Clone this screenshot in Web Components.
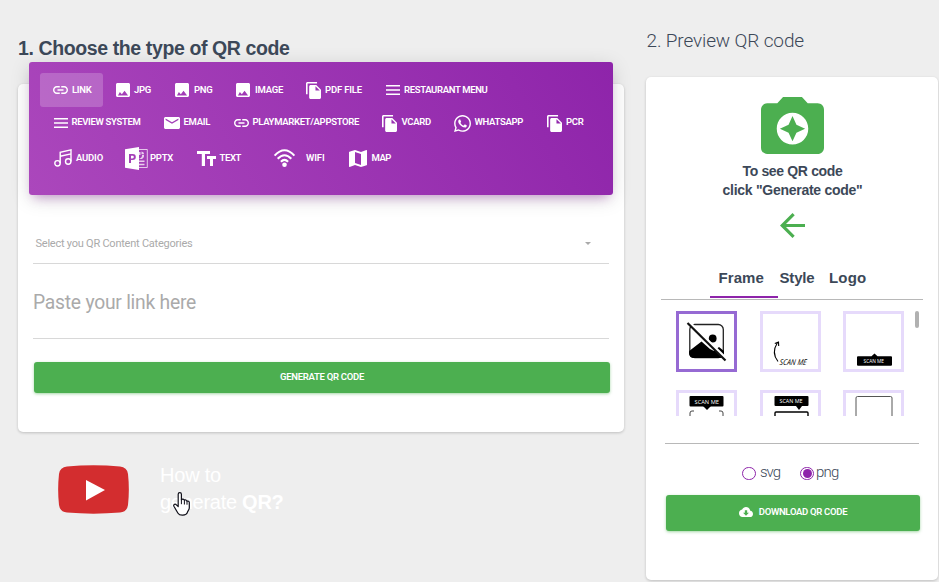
<!DOCTYPE html>
<html lang="en"><head><meta charset="utf-8"><title>QR code generator</title>
<style>
html,body{margin:0;height:582px;overflow:hidden;background:#eee}
body{font-family:Roboto,"Liberation Sans",sans-serif;color:#3c4858}
</style></head><body><qr-app></qr-app>
<script>
const ICONS={
link:['2 7 20 10','<path d="M3.9 12c0-1.71 1.39-3.1 3.1-3.1h4V7H7c-2.76 0-5 2.24-5 5s2.24 5 5 5h4v-1.9H7c-1.71 0-3.1-1.39-3.1-3.1zM8 13h8v-2H8v2zm9-6h-4v1.9h4c1.71 0 3.1 1.39 3.1 3.1s-1.39 3.1-3.1 3.1h-4V17h4c2.76 0 5-2.24 5-5s-2.24-5-5-5z"/>'],
image:['3 3 18 18','<path d="M21 19V5c0-1.1-.9-2-2-2H5c-1.1 0-2 .9-2 2v14c0 1.1.9 2 2 2h14c1.1 0 2-.9 2-2zM8 14.500l2.500 3.010L14 13l4.500 6h-13l2.500-4.500z"/>'],
copy:['2 1 19 22','<path d="M16 1H4c-1.100 0-2 .9-2 2v14h2V3h12V1zm-1 4l6 6v10c0 1.100-.9 2-2 2H7.990C6.890 23 6 22.100 6 21l.010-14c0-1.100.890-2 1.990-2h7zm-1 7h5.500L14 6.500V12z"/>'],
menu:['0 0 14 10','<path d="M0 0h14v1.500H0zM0 4.200h14v1.500H0zM0 8.400h14v1.500H0z"/>'],
mail:['2 4 20 16','<path d="M20 4H4c-1.100 0-1.990.9-1.990 2L2 18c0 1.100.9 2 2 2h16c1.100 0 2-.9 2-2V6c0-1.100-.9-2-2-2zm0 4l-8 5-8-5V6l8 5 8-5v2z"/>'],
whatsapp:['2 2 20 20','<path d="M12.04 2C6.58 2 2.13 6.45 2.13 11.91C2.13 13.66 2.59 15.36 3.45 16.86L2.05 22L7.3 20.62C8.75 21.41 10.38 21.83 12.04 21.83C17.5 21.83 21.95 17.38 21.95 11.92C21.95 9.27 20.92 6.78 19.05 4.91C17.18 3.03 14.69 2 12.04 2M12.05 3.67C14.25 3.67 16.31 4.53 17.87 6.09C19.42 7.65 20.28 9.72 20.28 11.92C20.28 16.46 16.58 20.15 12.04 20.15C10.56 20.15 9.11 19.76 7.85 19L7.55 18.83L4.43 19.65L5.26 16.61L5.06 16.29C4.24 15 3.8 13.47 3.8 11.91C3.81 7.37 7.5 3.67 12.05 3.67M8.53 7.33C8.37 7.33 8.1 7.39 7.87 7.64C7.65 7.89 7 8.5 7 9.71C7 10.93 7.89 12.1 8 12.27C8.14 12.44 9.76 14.94 12.25 16C12.84 16.27 13.3 16.42 13.66 16.53C14.25 16.72 14.79 16.69 15.22 16.63C15.7 16.56 16.68 16.03 16.89 15.45C17.1 14.87 17.1 14.38 17.04 14.27C16.97 14.17 16.81 14.11 16.56 14C16.31 13.86 15.09 13.26 14.87 13.18C14.64 13.1 14.5 13.06 14.31 13.3C14.15 13.55 13.67 14.11 13.53 14.27C13.38 14.44 13.24 14.46 13 14.34C12.74 14.21 11.94 13.95 11 13.11C10.26 12.45 9.77 11.64 9.62 11.39C9.5 11.15 9.61 11 9.73 10.89C9.84 10.78 10 10.6 10.1 10.45C10.23 10.31 10.27 10.2 10.35 10.04C10.43 9.87 10.39 9.73 10.33 9.61C10.27 9.5 9.77 8.26 9.56 7.77C9.36 7.29 9.16 7.35 9 7.34C8.86 7.34 8.7 7.33 8.53 7.33Z"/>'],
audio:['0 0 18 18','<g fill="none" stroke="currentColor" stroke-width="1.400"><circle cx="3.500" cy="14.300" r="2.700"/><circle cx="14.200" cy="12.500" r="2.700"/><path d="M6.200 14.300V3.300L17 .9v11.600M6.200 7.300L17 4.900"/></g>'],
pptx:['0 0 23 23','<path fill-rule="evenodd" d="M0 2.200L14 0v23L0 20.700zM4 7v9h2v-3h1.500c2.500 0 3.300-1.300 3.300-3S10 7 7.800 7zm2 1.700h1.300c1 0 1.500.4 1.500 1.300s-.5 1.400-1.500 1.400H6z"/><path fill="none" stroke="currentColor" stroke-width="1" opacity=".7" d="M14 2.500h8.300v18H14"/><path opacity=".75" d="M14 13.500h5.500V15H14zM14 16.800h5.500v1.400H14zM14 5v3h3a3 3 0 0 1-3 3.500 3.300 3.300 0 0 0 5-3.500h-3.500V5z"/><path opacity=".75" d="M16.500 4.500a3 3 0 0 1 2.700 2.700h-2.700z"/>'],
text:['0 0 19 15','<path d="M0 0h13v3H8v12H4.800V3H0zM10 5h9v3h-3v7h-3V8h-3z"/>'],
wifi:['0 0 21 18','<g fill="none" stroke="currentColor" stroke-width="2.100"><path d="M.6 6.600Q10.500-4 20.400 6.600M3.700 9.800q6.800-7 13.600 0M6.900 12.700q3.600-3.700 7.200 0"/></g><circle cx="10.500" cy="15.700" r="2.300"/>'],
map:['3 3 18 18','<path d="M20.500 3l-.160.030L15 5.100 9 3 3.360 4.900c-.210.070-.360.250-.360.480V20.500c0 .280.220.500.500.500l.160-.030L9 18.900l6 2.100 5.640-1.900c.210-.070.360-.250.360-.480V3.500c0-.280-.220-.500-.500-.500zM15 19l-6-2.110V5l6 2.110V19z"/>'],
camera:['2 3 20 18','<path d="M9 3L7.170 5H4c-1.100 0-2 .9-2 2v12c0 1.100.9 2 2 2h16c1.100 0 2-.9 2-2V7c0-1.100-.9-2-2-2h-3.170L15 3H9zm3 15c-2.760 0-5-2.240-5-5s2.240-5 5-5 5 2.240 5 5-2.240 5-5 5zm0-1l1.250-2.750L16 13l-2.750-1.250L12 9l-1.250 2.750L8 13l2.750 1.250z"/>'],
back:['4 4 16 16','<path d="M20 11H7.830l5.590-5.590L12 4l-8 8 8 8 1.410-1.410L7.830 13H20v-2z"/>'],
cloud:['0 4 24 16','<path d="M19.350 10.040C18.670 6.590 15.640 4 12 4 9.110 4 6.600 5.640 5.350 8.040 2.340 8.360 0 10.910 0 14c0 3.310 2.690 6 6 6h13c2.760 0 5-2.240 5-5 0-2.640-2.050-4.780-4.650-4.960zM17 13l-5 5-5-5h3V9h4v4h3z"/>'],
youtube:['0 0 71 49','<path fill="#d32d2f" d="M9 1.500Q35.500-.8 62 1.500 69 2 70 9q1.700 15.500 0 31-1 7-8 7.500-26.500 2.300-53 0Q2 47 1 40-.7 24.500 1 9 2 2 9 1.500z"/><path fill="#fff" d="M28 15l19 10-19 10.500z"/>'],
caret:['0 0 6 3','<path d="M0 0h6L3 3z"/>'],
hand:['0 0 17 24','<path fill="#fff" stroke="#10101a" stroke-width="1.200" stroke-linejoin="round" d="M5.200 14.500V2.300C5.200.1 8.400.1 8.400 2.300v5.500c.7-1 2.700-.8 3 .6.800-.8 2.400-.5 2.600.9.900-.6 2.300-.1 2.300 1.300v5.500c0 1.600-1.700 3-2 4.500-1 3.200-7.800 3.200-9.300.6L.9 14.300c-.8-1.600 1-2.800 2.200-1.700z"/><path stroke="#10101a" fill="none" d="M8.400 7.500v4.700M11.400 8.500v4M14 9.500v3.200"/>']
};
const define=(name,html,setup)=>{
  const t=document.createElement('template');t.innerHTML=html;
  customElements.define(name,class extends HTMLElement{
    connectedCallback(){
      if(this.shadowRoot)return;
      this.attachShadow({mode:'open'}).append(t.content.cloneNode(true));
      if(setup)setup(this,this.shadowRoot);
    }
  });
};
/* icon: name, w, h */
define('qr-icon','<style>:host{display:block;flex:none}svg{display:block;fill:currentColor;overflow:visible}</style>',(el,r)=>{
  const [vb,body]=ICONS[el.getAttribute('name')];
  r.innerHTML+=`<svg width="${el.getAttribute('w')}" height="${el.getAttribute('h')}" viewBox="${vb}" preserveAspectRatio="none">${body}</svg>`;
});
/* single line of text whose tracking is set so that it spans w pixels */
define('fit-text','<style>:host{display:block;white-space:nowrap;flex:none}</style><span><slot></slot></span>',(el,r)=>{
  const s=r.querySelector('span'),w=+el.getAttribute('w'),n=el.textContent.length;
  s.style.letterSpacing=(w-s.getBoundingClientRect().width)/n+'px';
});
/* one entry of the type menu: left offset comes from the track widths of its row */
define('qr-type',`<style>:host{display:flex;align-items:center;height:34px;box-sizing:border-box;padding-left:13px;border-radius:3px;font-size:9.5px;font-weight:600;color:#fff}
:host([active]){background:rgba(255,255,255,.2)}</style><slot></slot>`);
define('qr-types',`<style>:host{display:block;height:133px;margin:-22px 11px 0;border-radius:3px;box-sizing:border-box;padding:11px 11px 0;background:linear-gradient(60deg,#ab47bc,#8e24aa);box-shadow:0 4px 20px 0 rgba(0,0,0,.14),0 7px 10px -5px rgba(156,39,176,.4)}
.row{display:grid;height:34px;justify-content:start}
.a{grid-template-columns:63px 59px 61px 70px 80px 120px}
.b{grid-template-columns:110px 70px 148px 72px 93px 60px;margin-top:-2px}
.c{grid-template-columns:71px 72px 77px 75px 70px;margin-top:2px}
fit-text{margin-left:var(--g,4px);margin-top:-1px}
</style><div class="row a"></div><div class="row b"></div><div class="row c"></div>`,(el,r)=>{
  const rows={a:[['link',15,8,4,'LINK',19.500],['image',14,14,4,'JPG',17],['image',14,14,5,'PNG',18.500],['image',14,14,5,'IMAGE',28],['copy',15,17,4,'PDF FILE',37],['menu',14,10,4,'RESTAURANT MENU',83.500]],
  b:[['menu',14,10,3.500,'REVIEW SYSTEM',69],['mail',16,12,3.500,'EMAIL',26.500],['link',15,8,3.500,'PLAYMARKET/APPSTORE',106.500],['copy',15,17,4.500,'VCARD',29.500],['whatsapp',17,17,3.500,'WHATSAPP',48.500],['copy',15,17,4,'PCR',17.500]],
  c:[['audio',18,18,4,'AUDIO',27],['pptx',23,23,2,'PPTX',23],['text',19,15,3.500,'TEXT',21.500],['wifi',21,18,11,'WIFI',18.500],['map',18,17,4.500,'MAP',19.500]]};
  /* the lower rows start one pixel further in than the highlighted entry */
  const shift={a:0,b:1,c:1};
  for(const k in rows){
    const row=r.querySelector('.'+k);row.style.marginLeft=shift[k]+'px';
    row.innerHTML=rows[k].map(([i,w,h,g,t,tw],n)=>`<qr-type ${k=='a'&&!n?'active':''}><qr-icon name="${i}" w="${w}" h="${h}" style="margin-top:${k=='b'?2:0}px"></qr-icon><fit-text w="${tw}" style="--g:${g}px">${t}</fit-text></qr-type>`).join('');
  }
});
define('qr-card','<style>:host{display:block;box-sizing:border-box;background:#fff;border-radius:5px;box-shadow:0 1px 3px rgba(0,0,0,.2)}</style><slot></slot>');
define('qr-field',`<style>:host{display:flex;align-items:center;justify-content:space-between;box-sizing:border-box;border-bottom:1px solid #d8d8d8;color:#aaa;font-size:11px}</style><slot></slot>`);
define('qr-button',`<style>:host{display:flex;align-items:center;justify-content:center;box-sizing:border-box;background:#4caf50;color:#fff;border-radius:3px;font-size:9.5px;font-weight:600;box-shadow:0 1px 3px rgba(76,175,80,.5)}</style><slot></slot>`);
define('qr-radio',`<style>:host{display:flex;align-items:center}i{display:flex;box-sizing:border-box;width:14px;height:13px;border:1px solid #8e24aa;border-radius:7px;margin-right:var(--g,4px);margin-top:2px;padding:1px}
:host([checked]) i::before{content:"";flex:1;border-radius:50%;background:#8e24aa;margin:0 .5px}</style><i></i><slot></slot>`);
const scan=(x,y,w,fs=6)=>`<text x="${x}" y="${y}" font-family="Open Sans,sans-serif" font-size="${fs}" fill="#fff" textLength="${w}" lengthAdjust="spacingAndGlyphs">SCAN ME</text>`;
const FRAMES=[
`<rect x="10.800" y="10.500" width="33.500" height="33" rx="5" fill="#fff" stroke="#222" stroke-width="1.300"/><path d="M10.200 37L22.500 27.500l8.500 7.500 4 2 5-4 5 4V39.500q0 4.500-5 4.500h-25q-5 0-5-5z"/><circle cx="33.700" cy="24.500" r="3.900"/><path d="M10 8.500L46 44" stroke="#fff" stroke-width="3.500"/><path d="M8.500 9L46.500 46.500" stroke="#111" stroke-width="2.200"/>`,
`<path d="M15 47.500Q8 39 14.500 28.500M11.800 29.500l3.700-1.500.2 4" fill="none" stroke="#000" stroke-width="1.100"/><text x="16.500" y="50.800" transform="skewX(-8) translate(7 0)" font-family="Open Sans,sans-serif" font-style="italic" font-size="8" textLength="27" lengthAdjust="spacingAndGlyphs">SCAN ME</text>`,
`<path d="M11 42.300h14.500l3-2.800 3 2.800H45q1 0 1 1v7.500q0 1-1 1H12q-1 0-1-1v-7.500q0-1 1-1z"/>${scan(17.500,49,20.500,5)}`,
`<rect x="10.500" y="3" width="34" height="10.500" rx="1"/><path d="M24 13h8l-4 4z"/>${scan(15.500,10.500,24.500)}<path d="M11 30v-10q0-2 2-2h2M40 18h2q2 0 2 2v10" fill="none" stroke="#444"/>`,
`<rect x="11.500" y="3" width="34" height="10" rx="1"/><path d="M33 13h6l-3 4z"/>${scan(16.500,10,23,5.500)}<path d="M12 30V20q0-1 1-1h31q1 0 1 1v10" fill="none" stroke="#000" stroke-width="1.400"/>`,
`<path d="M10 30V5q0-1.500 1.500-1.500h33Q46 3.500 46 5v25" fill="none" stroke="#555"/>`];
define('frame-tile',`<style>:host{display:block;box-sizing:border-box;width:61px;height:61px;border:3px solid #e6dafb}:host([selected]){border-color:#966ad3}svg{display:block;width:55px;height:55px}</style>`,(el,r)=>{
  r.innerHTML+=`<svg viewBox="0 0 55 55">${FRAMES[+el.getAttribute('kind')]}</svg>`;
});
define('frame-picker',`<style>:host{display:flex;justify-content:space-between;height:105px;overflow:hidden;margin:11px 19px 0 30px}
.grid{display:grid;grid-template-columns:84px 83px 61px;grid-auto-rows:79px}i{width:4px;height:17px;border-radius:2px;background:#b1b1b1}</style>
<div class="grid"><frame-tile kind="0" selected></frame-tile><frame-tile kind="1"></frame-tile><frame-tile kind="2"></frame-tile><frame-tile kind="3"></frame-tile><frame-tile kind="4"></frame-tile><frame-tile kind="5"></frame-tile></div><i></i>`);
define('qr-tabs',`<style>:host{display:flex;box-sizing:border-box;height:41px;margin:21px 15px 0;padding-left:49px;border-bottom:1px solid #b8b8b8;font:bold 15px/38px "Liberation Sans",sans-serif}
div{display:flex;box-sizing:border-box;height:39px}
.on{width:68px;border-bottom:2px solid #8e24aa;padding-left:8.500px}.s{padding-left:1.500px;width:51px}</style>
<div class="on"><fit-text w="45.500">Frame</fit-text></div><div class="s"><fit-text w="35">Style</fit-text></div><div><fit-text w="37.500">Logo</fit-text></div>`);
define('video-link',`<style>:host{display:flex;position:relative;margin:33px 0 0 40px;color:#fff;font:20px/27px "Liberation Sans",sans-serif}
.t{margin:-3px 0 0 31px}.hand{position:absolute;left:115px;top:27px}</style><qr-icon name="youtube" w="71" h="49"></qr-icon>
<div class="t"><fit-text w="61">How to</fit-text><fit-text w="123.500">generate <b>QR?</b></fit-text></div><qr-icon class="hand" name="hand" w="17" h="24"></qr-icon>`);
define('qr-app',`<style>:host{display:grid;grid-template-columns:606px 292px;column-gap:22px;padding-left:18px;height:582px;box-sizing:border-box}
h2{margin:0;display:flex;align-items:center}
.h1{font:bold 19.5px "Liberation Sans",sans-serif;height:96px;margin-bottom:-12px}
.h2{font-weight:300;font-size:19px;height:81px;margin-bottom:-4px;padding-left:.5px}
.form{height:348px}
.sel{height:40px;margin:29px 15px 0;padding:0 18px 0 2.500px}
.inp{height:75px;margin:0 15px;font-size:19.3px;padding-top:2px}
.go{height:31px;margin:23px 14px 0 16px;padding-bottom:2px}
.prev{height:503px;padding-top:20px}
.cam{display:flex;flex-direction:column;align-items:center;color:#4caf50}
.msg{color:#3c4858;font:bold 14px/19px "Liberation Sans",sans-serif;margin:8px 0 13px 1px;display:flex;flex-direction:column;align-items:center}
.line{height:1px;background:#b8b8b8;margin:27px 19px 0}
.fmt{display:flex;margin:18px 0 0 96px;height:20px;font-size:15px;font-weight:300}
.dl{height:36px;margin:13px 18px 0 20px;padding-bottom:3px}
</style>
<section><h2 class="h1"><fit-text w="271.500">1. Choose the type of QR code</fit-text></h2>
<qr-card class="form" style="display:flow-root;height:348px;overflow:visible"><qr-types></qr-types>
<qr-field class="sel"><fit-text w="157">Select you QR Content Categories</fit-text><qr-icon name="caret" w="6" h="3"></qr-icon></qr-field>
<qr-field class="inp"><fit-text w="163">Paste your link here</fit-text></qr-field>
<qr-button class="go"><fit-text w="84">GENERATE QR CODE</fit-text></qr-button></qr-card>
<video-link></video-link></section>
<section><h2 class="h2"><fit-text w="157.500">2. Preview QR code</fit-text></h2>
<qr-card class="prev"><div class="cam"><qr-icon name="camera" w="63" h="57"></qr-icon>
<div class="msg"><fit-text w="100">To see QR code</fit-text><fit-text w="140">click "Generate code"</fit-text></div>
<qr-icon name="back" w="25" h="25"></qr-icon></div>
<qr-tabs></qr-tabs><frame-picker></frame-picker><div class="line"></div>
<div class="fmt"><qr-radio><fit-text w="20">svg</fit-text></qr-radio><qr-radio checked style="margin-left:20px;--g:2px"><fit-text w="22.500">png</fit-text></qr-radio></div>
<qr-button class="dl"><qr-icon name="cloud" w="14" h="10" style="margin-right:6px"></qr-icon><fit-text w="88.500">DOWNLOAD QR CODE</fit-text></qr-button>
</qr-card></section>`);
</script></body></html>
